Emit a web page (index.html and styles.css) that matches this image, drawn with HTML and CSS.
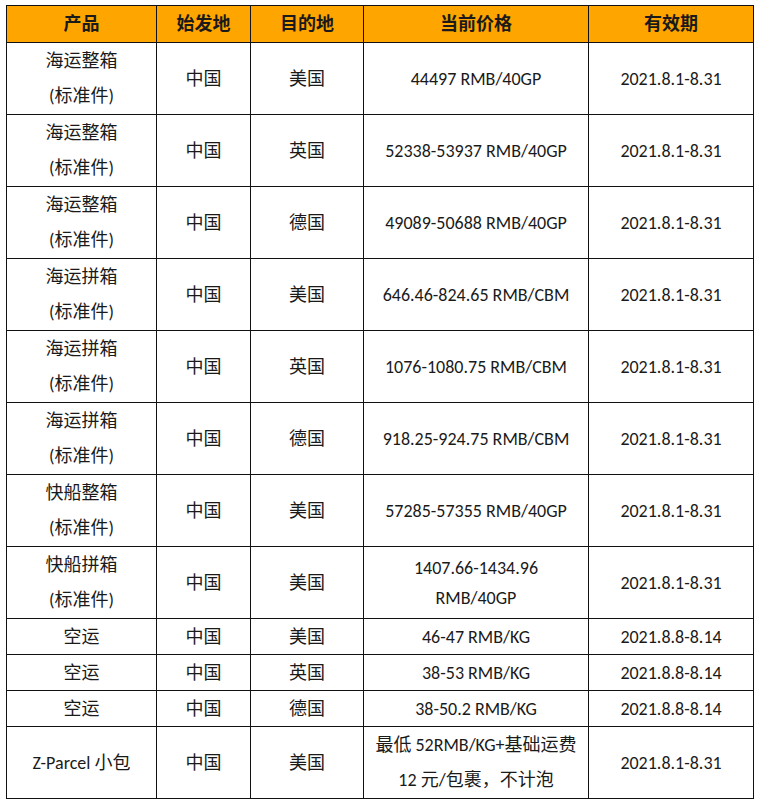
FILE: index.html
```html
<!DOCTYPE html>
<html lang="zh-CN">
<head>
<meta charset="utf-8">
<title>运价表</title>
<link rel="stylesheet" href="styles.css">
</head>
<body>
<table class="rates">
  <colgroup>
    <col class="c1"><col class="c2"><col class="c3"><col class="c4"><col class="c5">
  </colgroup>
  <thead>
    <tr class="head"><th>产品</th><th>始发地</th><th>目的地</th><th>当前价格</th><th>有效期</th></tr>
  </thead>
  <tbody>
    <tr class="tall"><td class="two">海运整箱<br>(标准件)</td><td>中国</td><td>美国</td><td>44497 RMB/40GP</td><td>2021.8.1-8.31</td></tr>
    <tr class="tall"><td class="two">海运整箱<br>(标准件)</td><td>中国</td><td>英国</td><td>52338-53937 RMB/40GP</td><td>2021.8.1-8.31</td></tr>
    <tr class="tall"><td class="two">海运整箱<br>(标准件)</td><td>中国</td><td>德国</td><td>49089-50688 RMB/40GP</td><td>2021.8.1-8.31</td></tr>
    <tr class="tall"><td class="two">海运拼箱<br>(标准件)</td><td>中国</td><td>美国</td><td>646.46-824.65 RMB/CBM</td><td>2021.8.1-8.31</td></tr>
    <tr class="tall"><td class="two">海运拼箱<br>(标准件)</td><td>中国</td><td>英国</td><td>1076-1080.75 RMB/CBM</td><td>2021.8.1-8.31</td></tr>
    <tr class="tall"><td class="two">海运拼箱<br>(标准件)</td><td>中国</td><td>德国</td><td>918.25-924.75 RMB/CBM</td><td>2021.8.1-8.31</td></tr>
    <tr class="tall"><td class="two">快船整箱<br>(标准件)</td><td>中国</td><td>美国</td><td>57285-57355 RMB/40GP</td><td>2021.8.1-8.31</td></tr>
    <tr class="tall"><td class="two">快船拼箱<br>(标准件)</td><td>中国</td><td>美国</td><td class="twolat">1407.66-1434.96<br>RMB/40GP</td><td>2021.8.1-8.31</td></tr>
    <tr class="short"><td>空运</td><td>中国</td><td>美国</td><td>46-47 RMB/KG</td><td>2021.8.8-8.14</td></tr>
    <tr class="short"><td>空运</td><td>中国</td><td>英国</td><td>38-53 RMB/KG</td><td>2021.8.8-8.14</td></tr>
    <tr class="short"><td>空运</td><td>中国</td><td>德国</td><td>38-50.2 RMB/KG</td><td>2021.8.8-8.14</td></tr>
    <tr class="tall"><td>Z-Parcel 小包</td><td>中国</td><td>美国</td><td class="two">最低 52RMB/KG+基础运费<br>12 元/包裹，不计泡</td><td>2021.8.1-8.31</td></tr>
  </tbody>
</table>
</body>
</html>
```
FILE: styles.css
```css
html, body {
  margin: 0;
  padding: 0;
  background: #ffffff;
}
body {
  padding: 5px 0 0 6px;
  font-family: "Carlito", "Noto Sans CJK SC", sans-serif;
  font-size: 18px;
  color: #1a1a1a;
}
.rates {
  border-collapse: collapse;
  table-layout: fixed;
  width: 747px;
}
.c1 { width: 150px; }
.c2 { width: 94px; }
.c3 { width: 113px; }
.c4 { width: 225px; }
.c5 { width: 165px; }
.rates th, .rates td {
  border: 1px solid #111111;
  padding: 0;
  text-align: center;
  vertical-align: middle;
  line-height: 22px;
  white-space: nowrap;
}
.head th {
  background: #ffa500;
  font-weight: bold;
  height: 36px;
}
.tall td { height: 71px; }
.short td { height: 35px; }
.rates td.two { line-height: 35px; }
.rates td.twolat { line-height: 30px; }
```
